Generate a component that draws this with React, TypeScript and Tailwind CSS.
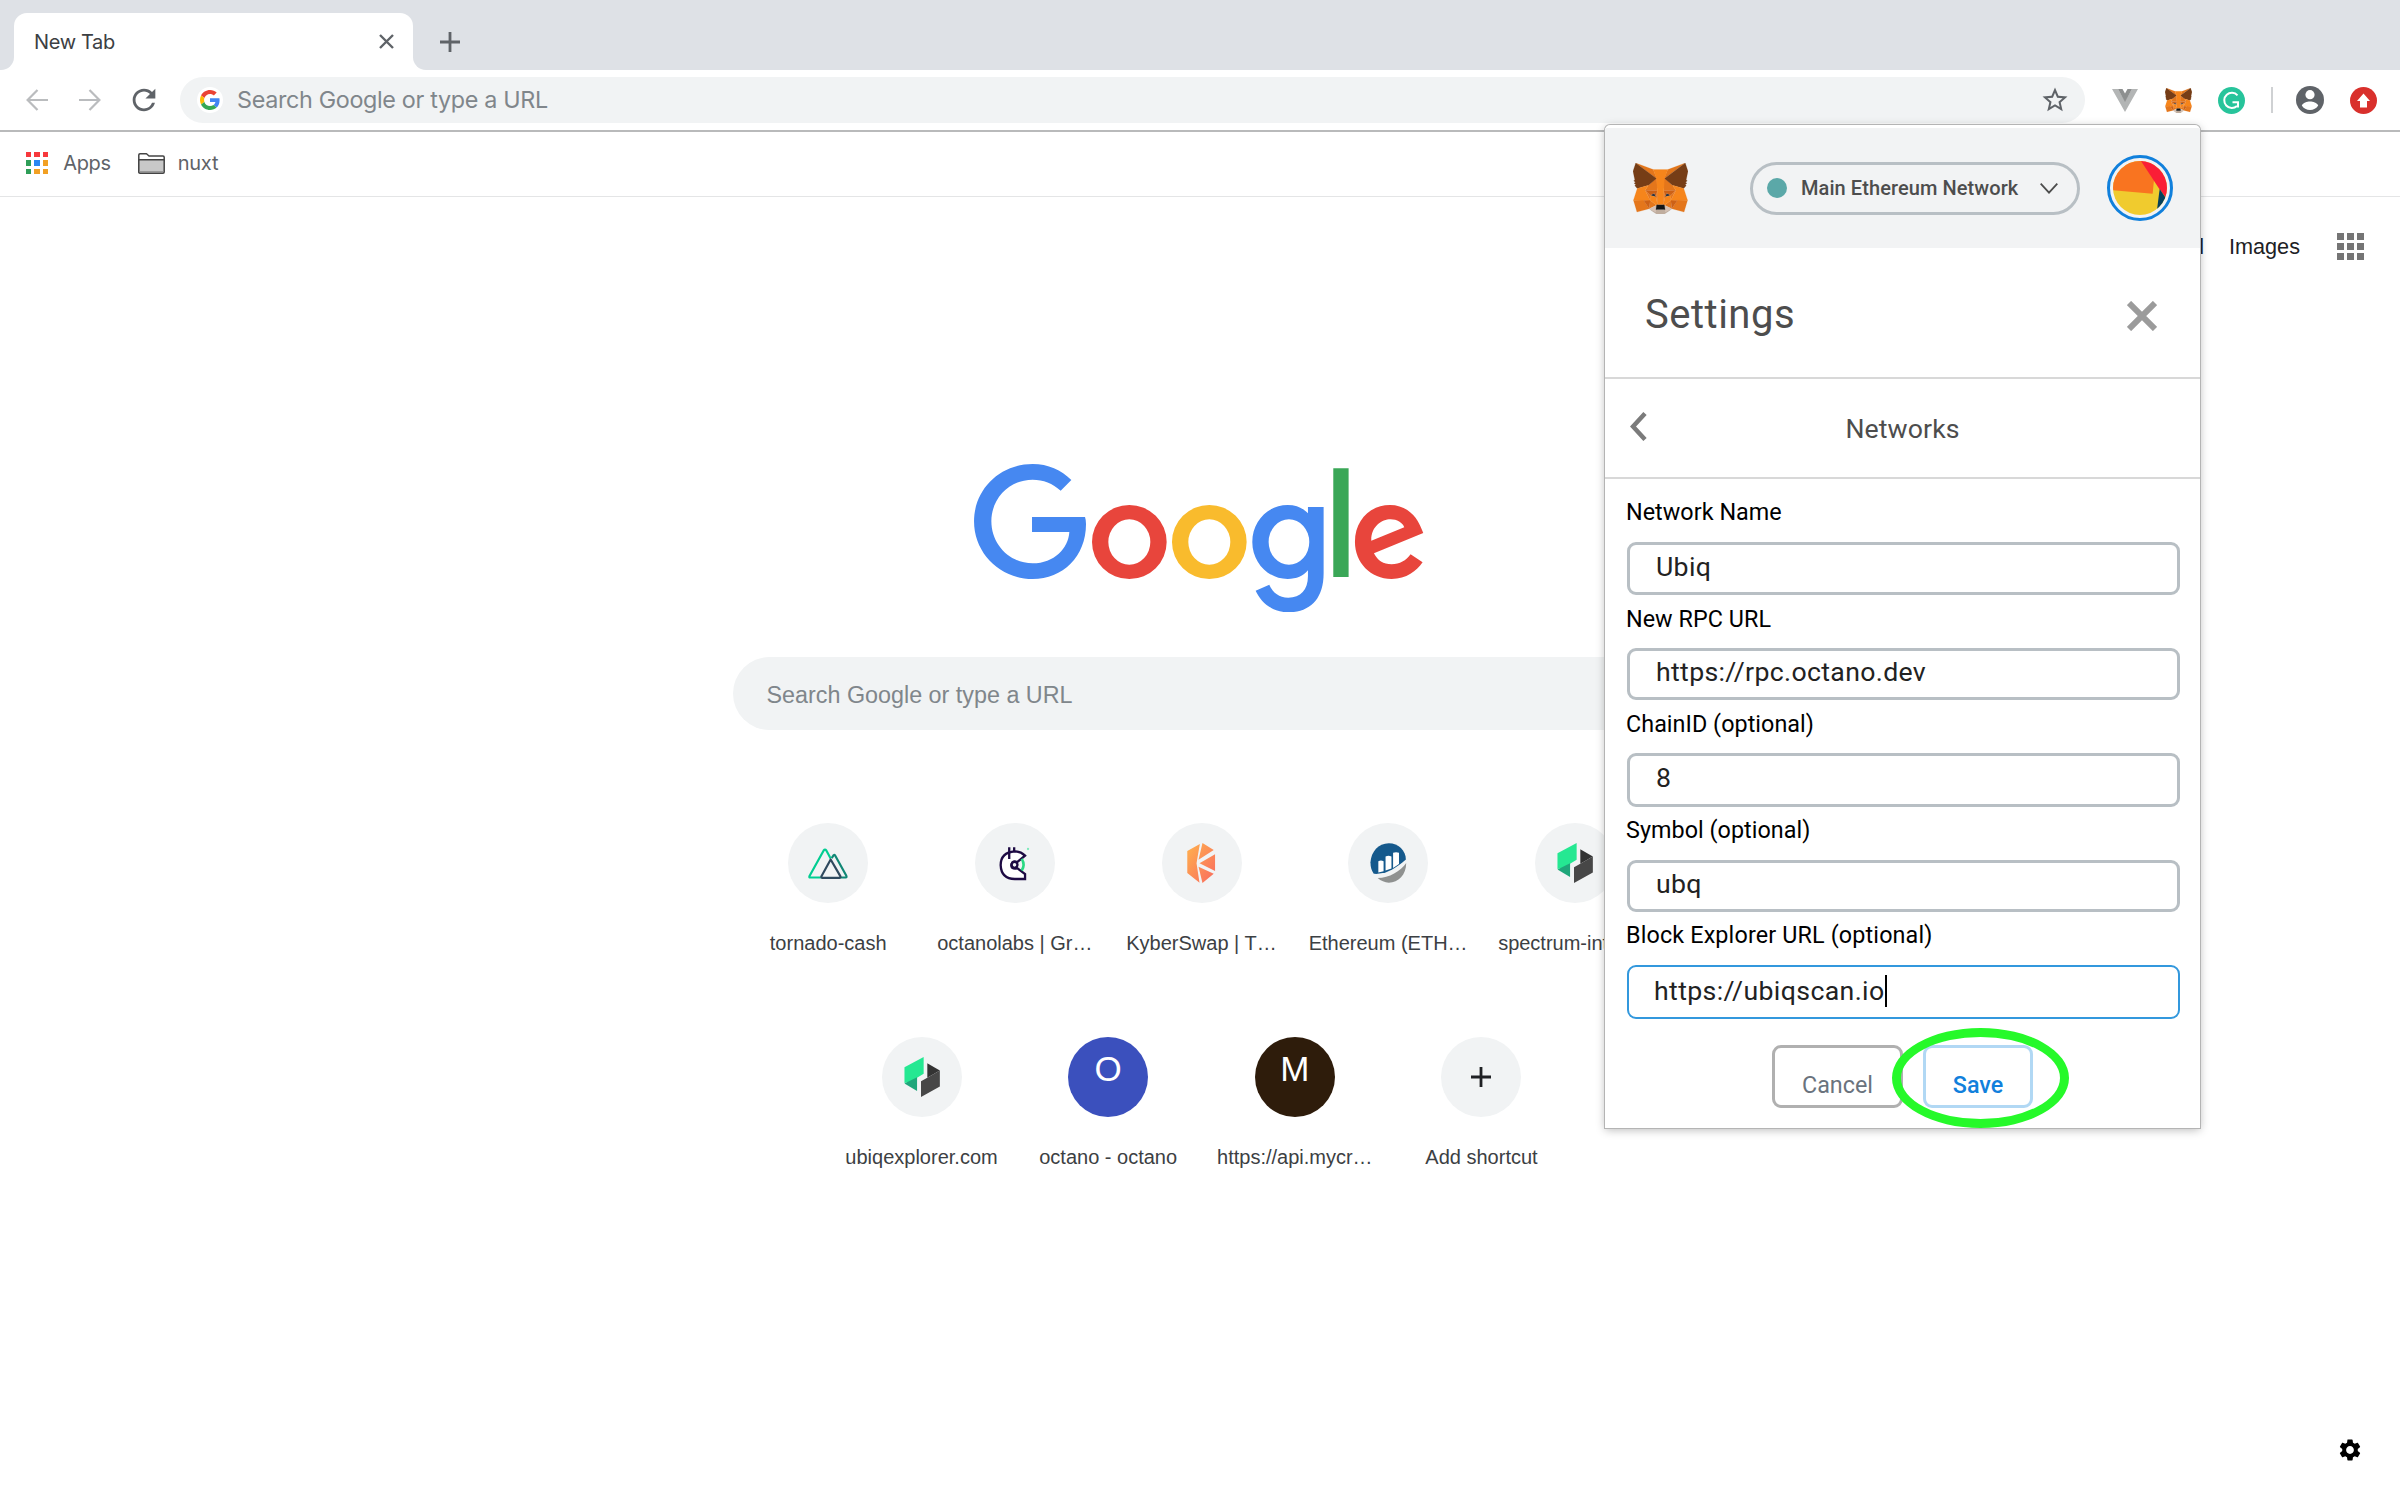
import React from "react";
import { MdSettings, MdStarBorder, MdRefresh } from "react-icons/md";

type IconProps = { className?: string };

function Fox({ className }: IconProps) {
  const shapes: [string, string][] = [
    ["#E2761B", "274.1,35.5 174.6,109.4 193,65.8"],
    ["#E4761B", "44.4,35.5 143.1,110.1 125.6,65.8"],
    ["#E4761B", "238.3,206.8 211.8,247.4 268.5,263 284.8,207.7"],
    ["#E4761B", "33.9,207.7 50.1,263 106.8,247.4 80.3,206.8"],
    ["#E4761B", "103.6,138.2 87.8,162.1 144.1,164.6 142.1,104.1"],
    ["#E4761B", "214.9,138.2 175.9,103.4 174.6,164.6 230.8,162.1"],
    ["#E4761B", "106.8,247.4 140.6,230.9 111.4,208.1"],
    ["#E4761B", "177.9,230.9 211.8,247.4 207.1,208.1"],
    ["#D7C1B3", "211.8,247.4 177.9,230.9 180.6,253 180.3,262.3"],
    ["#D7C1B3", "106.8,247.4 138.3,262.3 138.1,253 140.6,230.9"],
    ["#233447", "138.8,193.5 110.6,185.2 130.5,176.1"],
    ["#233447", "179.7,193.5 188,176.1 208,185.2"],
    ["#CD6116", "106.8,247.4 111.6,206.8 80.3,207.7"],
    ["#CD6116", "207,206.8 211.8,247.4 238.3,207.7"],
    ["#CD6116", "230.8,162.1 174.6,164.6 179.8,193.5 188.1,176.1 208.1,185.2"],
    ["#CD6116", "110.6,185.2 130.6,176.1 138.8,193.5 144.1,164.6 87.8,162.1"],
    ["#E4751F", "87.8,162.1 111.4,208.1 110.6,185.2"],
    ["#E4751F", "208.1,185.2 207.1,208.1 230.8,162.1"],
    ["#E4751F", "144.1,164.6 138.8,193.5 145.4,227.6 146.9,182.7"],
    ["#E4751F", "174.6,164.6 171.9,182.6 173.1,227.6 179.8,193.5"],
    ["#F6851B", "179.8,193.5 173.1,227.6 177.9,230.9 207.1,208.1 208.1,185.2"],
    ["#F6851B", "110.6,185.2 111.4,208.1 140.6,230.9 145.4,227.6 138.8,193.5"],
    ["#C0AD9E", "180.3,262.3 180.6,253 178.1,250.8 140.4,250.8 138.1,253 138.3,262.3 106.8,247.4 117.8,256.4 140.1,271.9 178.4,271.9 200.8,256.4 211.8,247.4"],
    ["#161616", "177.9,230.9 173.1,227.6 145.4,227.6 140.6,230.9 138.1,253 140.4,250.8 178.1,250.8 180.6,253"],
    ["#763D16", "278.3,114.2 286.8,73.4 274.1,35.5 177.9,106.9 214.9,138.2 267.2,153.5 278.8,140 273.8,136.4 281.8,129.1 275.6,124.3 283.6,118.2"],
    ["#763D16", "31.8,73.4 40.3,114.2 34.9,118.2 42.9,124.3 36.8,129.1 44.8,136.4 39.8,140 51.3,153.5 103.6,138.2 140.6,106.9 44.4,35.5"],
    ["#F6851B", "267.2,153.5 214.9,138.2 230.8,162.1 207.1,208.1 238.3,207.7 284.8,207.7"],
    ["#F6851B", "103.6,138.2 51.3,153.5 33.9,207.7 80.3,207.7 111.4,208.1 87.8,162.1"],
    ["#F6851B", "174.6,164.6 177.9,106.9 193.1,65.8 125.6,65.8 140.6,106.9 144.1,164.6 145.3,182.8 145.4,227.6 173.1,227.6 173.3,182.8"],
  ];
  return (
    <svg viewBox="31.8 35.5 255 236.4" className={className}>
      {shapes.map(([fill, points]) => (
        <polygon key={points} fill={fill} stroke={fill} strokeWidth="0.8" points={points} />
      ))}
    </svg>
  );
}

function GoogleLogo({ className }: IconProps) {
  return (
    <svg viewBox="72 72 1348 445" className={className} fillRule="evenodd">
      <path fill="#4688f1" d="M364 120L332 152C308 130 280 119 248 119C178 119 124 175 124 244C124 313 178 370 248 370C313 370 355 325 358 276H246V231H405Q408 240 408 252C408 350 338 417 248 417C150 417 72 340 72 244C72 148 150 72 248 72C294 72 334 90 364 120Z" />
      <path fill="#e8453c" d="M426 306A112 111 0 1 0 650 306A112 111 0 1 0 426 306ZM475 306A63 68 0 1 1 601 306A63 68 0 1 1 475 306Z" />
      <path fill="#f9bb2d" d="M666 306A112 111 0 1 0 890 306A112 111 0 1 0 666 306ZM715 306A63 68 0 1 1 841 306A63 68 0 1 1 715 306Z" />
      <path fill="#4688f1" d="M1074 201H1121V400C1121 478 1080 517 1015 517C965 517 932 485 917 452L958 434C967 455 985 473 1015 473C1052 473 1074 450 1074 408V391C1060 408 1040 417 1013 417C955 417 907 368 907 306C907 243 955 195 1013 195C1040 195 1060 205 1074 220ZM956 306A61 68 0 1 0 1078 306A61 68 0 1 0 956 306Z" />
      <path fill="#3aa757" d="M1150 85H1196V411H1150Z" />
      <path fill="#e8453c" d="M1382 343L1418 367C1400 393 1370 417 1325 417C1262 417 1215 368 1215 306C1215 240 1262 195 1320 195C1378 195 1405 240 1415 267L1420 279L1272 340C1283 362 1300 373 1325 373C1350 373 1368 362 1382 343ZM1264 302L1363 262C1358 248 1341 238 1322 238C1295 238 1263 260 1264 302Z" />
    </svg>
  );
}

function GoogleG({ className }: IconProps) {
  return (
    <svg viewBox="0 0 48 48" className={className}>
      <path fill="#EA4335" d="M24 9.5c3.54 0 6.71 1.22 9.21 3.6l6.85-6.85C35.9 2.38 30.47 0 24 0 14.62 0 6.51 5.38 2.56 13.22l7.98 6.19C12.43 13.72 17.74 9.5 24 9.5z" />
      <path fill="#4285F4" d="M46.98 24.55c0-1.57-.15-3.09-.38-4.55H24v9.02h12.94c-.58 2.96-2.26 5.48-4.78 7.18l7.73 6c4.51-4.18 7.09-10.36 7.09-17.65z" />
      <path fill="#FBBC05" d="M10.53 28.59c-.48-1.45-.76-2.99-.76-4.59s.27-3.14.76-4.59l-7.98-6.19C.92 16.46 0 20.12 0 24c0 3.88.92 7.54 2.56 10.78l7.97-6.19z" />
      <path fill="#34A853" d="M24 48c6.48 0 11.93-2.13 15.89-5.81l-7.73-6c-2.15 1.45-4.92 2.3-8.16 2.3-6.26 0-11.57-4.22-13.47-9.91l-7.98 6.19C6.51 42.62 14.62 48 24 48z" />
    </svg>
  );
}

function Arrow({ className }: IconProps) {
  return (
    <svg viewBox="0 0 22 22" className={className} fill="none" stroke="#babcbe" strokeWidth="2.2">
      <path d="M22 11H2M11.5 1L1.6 11L11.5 21" />
    </svg>
  );
}

function Folder() {
  return (
    <svg viewBox="0 0 27 21" className="h-[21px] w-[27px]" stroke="#444" strokeWidth="1.5" strokeLinejoin="round">
      <path fill="#fff" d="M.8 19V2Q.8 .8 2 .8H8.5L11 3H25Q26.2 3 26.2 4.2V8H.8Z" />
      <path fill="#c8c8c8" d="M.8 6.7H26.2V19Q26.2 20.2 25 20.2H2Q.8 20.2 .8 19Z" />
      <path stroke="#999" strokeWidth="1.2" d="M1.8 18.6H25.2" />
    </svg>
  );
}

function Nuxt() {
  return (
    <svg viewBox="266 622 120 92" className="h-[31px] w-[40px]" fill="none" strokeLinejoin="round" strokeWidth="6.5">
      <path stroke="#108775" d="M337 652L343 643Q345 641 347 643L381 705Q383 710 379 710H362" />
      <path stroke="#00cd91" d="M304 710H271Q269 709 271 705L313 629Q317 624 321 629L334 653" />
      <path stroke="#2f495e" d="M334 656L306 707Q305 711 309 711H360Q365 710 363 706Z" />
    </svg>
  );
}

function Gridcoin() {
  return (
    <svg viewBox="837 615 94 106" className="h-[35px] w-[31px]" fill="none">
      <path fill="#fff" stroke="#1d0a43" strokeWidth="7" d="M916 644Q903 631 885 631Q842 634 842 673Q844 715 885 715H916V700L892 682Q884 686 876 680Q872 672 878 664Q884 660 892 664Z" />
      <circle cx="884" cy="672" r="9" stroke="#1d0a43" strokeWidth="7" />
      <path stroke="#1d0a43" strokeWidth="7" d="M868 619V654M883 619V633" />
      <path stroke="#2ad983" strokeWidth="8" d="M906 654Q917 672 906 689" />
      <circle cx="925" cy="624" r="3.5" fill="#7eeabb" />
    </svg>
  );
}

function Kyber() {
  return (
    <svg viewBox="260 129 86 121" className="h-[40px] w-[29px]">
      <defs>
        <linearGradient id="kyber" x1="0" y1="0" x2="1" y2="1" gradientUnits="objectBoundingBox">
          <stop offset="0" stopColor="#ffb24d" />
          <stop offset="1" stopColor="#f96a5f" />
        </linearGradient>
      </defs>
      <path fill="url(#kyber)" d="M298 132L260 153V220L297 249L288 190ZM306 129L340 150L294 180ZM344 163V214L297 190ZM294 201L340 222L306 250Z" />
    </svg>
  );
}

function Etherscan() {
  return (
    <svg viewBox="808 128 110 122" className="h-[40px] w-[37px]">
      <path fill="#15598c" d="M818 222Q808 208 808 187C810 155 832 129 864 129C893 129 916 152 916 178C905 188 885 203 866 213C850 221 833 223 818 222Z" />
      <path fill="#fff" d="M832 184Q840 178 848 184V214L832 218ZM854 169Q863 165 872 169V206L854 212ZM877 158Q886 154 895 158V192L877 204Z" />
      <path fill="#8f9190" d="M917 189C917 225 893 249 864 249Q845 248 830 235C865 235 900 214 917 189Z" />
    </svg>
  );
}

function Ubiq() {
  return (
    <svg viewBox="1371 129 108 121" className="h-[40px] w-[36px]">
      <path fill="#25e892" d="M1430 129V180L1410 192V200L1372 208V160Z" />
      <path fill="#1fa67a" d="M1372 209L1410 190V232Z" />
      <path fill="#333" d="M1441 148L1479 170L1441 192Z" />
      <path fill="#474747" d="M1422 202L1441 192L1479 170V218L1422 250Z" />
    </svg>
  );
}

function PlusMark() {
  return (
    <svg viewBox="0 0 20 20" className="size-5" stroke="#202124" strokeWidth="2.8">
      <path d="M10 0V20M0 10H20" />
    </svg>
  );
}

function Shortcut({ label, tone = "bg-[#f1f3f4]", children }: { label: string; tone?: string; children: React.ReactNode }) {
  return (
    <div className="flex h-[213.33px] w-[186.67px] flex-col items-center">
      <div className={`flex size-20 shrink-0 items-center justify-center rounded-full ${tone}`}>{children}</div>
      <div className="mt-[28px] text-[20px] leading-[24px] whitespace-nowrap text-[#3c4043]">{label}</div>
    </div>
  );
}

function Letter({ children }: { children: string }) {
  return <span className="-mt-[16px] text-[35px] leading-[40px] text-white">{children}</span>;
}

const waffle = ["a", "b", "c", "d", "e", "f", "g", "h", "i"];
const appColors = ["bg-[#f7383c]", "bg-[#f7383c]", "bg-[#f7383c]", "bg-[#2f9e58]", "bg-[#2a86f0]", "bg-[#f2a023]", "bg-[#2f9e58]", "bg-[#f2a023]", "bg-[#f2a023]"];

const fields = [
  { label: "Network Name", value: "Ubiq", row: "h-[107px]", box: "h-[53px]", gap: "mb-[17px]" },
  { label: "New RPC URL", value: "https://rpc.octano.dev", row: "h-[105px]", box: "h-[52px]", gap: "mb-[16px]" },
  { label: "ChainID (optional)", value: "8", row: "h-[106px]", box: "h-[54px]", gap: "mb-[16px]" },
  { label: "Symbol (optional)", value: "ubq", row: "h-[105px]", box: "h-[52px]", gap: "mb-[17px]" },
];

function Popup() {
  return (
    <div className="absolute top-[125px] left-[1605px] flex h-[1003px] w-[595px] flex-col rounded-t-[5px] bg-white pt-[3px] font-['Roboto',sans-serif] shadow-[0_0_0_1px_#b4b4b4,0_2px_10px_rgba(0,0,0,0.28)]">
      <div className="flex h-[120px] shrink-0 items-center bg-[#f2f3f4] pl-[28px]">
        <Fox className="h-[51px] w-[55px]" />
        <div className="ml-[62px] flex h-[53px] w-[330px] items-center rounded-full border-[3px] border-[#b8bfc4] pl-[14px]">
          <span className="size-5 rounded-full bg-[#5ba8a8]" />
          <span className="ml-[14px] text-[20px] leading-6 font-medium tracking-[0.08px] whitespace-nowrap text-[#4d4d4d]">Main Ethereum Network</span>
          <svg viewBox="0 0 18 11" className="mr-[19px] ml-auto h-[11px] w-[18px]" fill="none" stroke="#4d4d4d" strokeWidth="1.8">
            <path d="M.7 .7L9 9.7L17.3 .7" />
          </svg>
        </div>
        <div className="ml-[27px] flex size-[66px] items-center justify-center rounded-full border-[3px] border-[#1180dc]">
          <svg viewBox="399 304 162 162" className="size-[54px] rounded-full">
            <path fill="#f0cb2e" d="M399 304H561V466H399Z" />
            <path fill="#f97420" d="M399 304H487L522 360L518 402L399 392Z" />
            <path fill="#fa1e36" d="M483 304H561V418L538 388Z" />
            <path fill="#04405c" d="M539 388L561 420V466H529Z" />
          </svg>
        </div>
      </div>
      <div className="flex h-[131px] shrink-0 items-center justify-between border-b-2 border-[#d8d8d8] pr-[43px] pl-[40px] text-[#4d4d4d]">
        <span className="mt-[5px] text-[40px] leading-[48px] tracking-[0.5px]">Settings</span>
        <svg viewBox="0 0 30 30" className="mt-[7px] size-[30px]" stroke="#9b9b9b" strokeWidth="6">
          <path d="M2 2L28 28M28 2L2 28" />
        </svg>
      </div>
      <div className="grid h-[100px] shrink-0 grid-cols-[40px_1fr_40px] items-center border-b-2 border-[#d8d8d8] text-[#4d4d4d]">
        <svg viewBox="0 0 17 29" className="-mt-[3px] ml-[25px] h-[29px] w-[17px]" fill="none" stroke="#7b7b7b" strokeWidth="4.5">
          <path d="M15 1.5L3 14.5L15 27.5" />
        </svg>
        <span className="mt-px text-center text-[26.67px] leading-8 tracking-[0.1px]">Networks</span>
      </div>
      <div className="flex flex-col px-[22px] pt-[20px]">
        {fields.map((f) => (
          <div key={f.label} className={f.row}>
            <div className={`-ml-px text-[23.33px] leading-[26px] tracking-[0.05px] text-black ${f.gap}`}>{f.label}</div>
            <div className={`flex w-[553px] items-center rounded-[9px] border-[3px] border-[#b8bfc4] pb-[4px] pl-[26px] text-[26.67px] leading-8 tracking-[0.34px] text-[#222] ${f.box}`}>{f.value}</div>
          </div>
        ))}
        <div>
          <div className="mb-[17px] -ml-px text-[23.33px] leading-[26px] tracking-[0.15px] text-black">Block Explorer URL (optional)</div>
          <div className="flex h-[54px] w-[553px] items-center rounded-[9px] border-2 border-[#3398dd] pb-[3px] pl-[25px] text-[26.67px] leading-8 tracking-[0.38px] text-[#222]">
            https://ubiqscan.io
            <span className="h-8 w-[2px] bg-black" />
          </div>
        </div>
      </div>
      <div className="relative mt-[26px] flex pl-[167px] text-[23.33px] leading-7">
        <div className="flex h-[63px] w-[131px] items-center justify-center rounded-[9px] border-[3px] border-[#b0b0b0] pt-[17px] text-[#6a737d]">Cancel</div>
        <div className="ml-[20px] flex h-[63px] w-[110px] items-center justify-center rounded-[9px] border-[3px] border-[#b1d8f4] pt-[17px] font-medium text-[#1180dc]">Save</div>
        <div className="absolute -top-[17px] left-[287px] h-[100px] w-[177px] rounded-[50%] border-[9px] border-[#26f92a]" />
      </div>
    </div>
  );
}

export default function App() {
  return (
    <div className="relative flex h-[1500px] w-[2400px] flex-col overflow-hidden bg-white font-['Liberation_Sans',Arial,sans-serif]">
      <div className="flex h-[70px] shrink-0 items-end bg-[#dee1e6]">
        <div className="h-[57px] w-[14px] bg-white"><div className="size-full rounded-br-[13px] bg-[#dee1e6]" /></div>
        <div className="flex h-[57px] w-[399px] items-center justify-between rounded-t-[13px] bg-white pr-[19px] pl-[20px] font-['Inter',sans-serif] text-[20px] tracking-[-0.35px] text-[#3c4043]">
          <span>New Tab</span>
          <svg viewBox="0 0 15 15" className="size-[15px]" stroke="#5f6368" strokeWidth="2.4">
            <path d="M1 1L14 14M14 1L1 14" />
          </svg>
        </div>
        <div className="h-[57px] w-[14px] bg-white"><div className="size-full rounded-bl-[13px] bg-[#dee1e6]" /></div>
        <svg viewBox="0 0 20 20" className="mb-[18px] ml-[13px] size-5" stroke="#5f6368" strokeWidth="2.8">
          <path d="M10 0V20M0 10H20" />
        </svg>
      </div>
      <div className="flex h-[62px] shrink-0 items-center border-b-2 border-[#b9babb] pl-[26px]">
        <Arrow className="size-[22px]" />
        <Arrow className="ml-[31px] size-[22px] rotate-180" />
        <MdRefresh className="ml-[26px] size-[34px] text-[#5f6368]" />
        <div className="ml-[19px] flex h-[46px] w-[1905px] items-center rounded-full bg-[#f1f3f4] pr-[15px] pl-[17px]">
          <div className="flex size-[26px] items-center justify-center rounded-full bg-white"><GoogleG className="size-5" /></div>
          <span className="ml-[14px] font-['Inter',sans-serif] text-[23.33px] tracking-[-0.33px] whitespace-nowrap text-[#80868b]">Search Google or type a URL</span>
          <MdStarBorder className="ml-auto size-[30px] text-[#5f6368]" />
        </div>
        <svg viewBox="0 0 26 23" className="ml-[27px] h-[23px] w-[26px]">
          <path fill="#b3b5b5" d="M0 0H6L13 12L20 0H26L13 23Z" />
          <path fill="#8d8f8f" d="M6 0H10.5L13 4.5L15.5 0H20L13 13Z" />
        </svg>
        <Fox className="ml-[27px] h-[25px] w-[27px]" />
        <svg viewBox="0 0 27 27" className="ml-[26px] size-[27px]" fill="none">
          <circle cx="13.5" cy="13.5" r="13.5" fill="#27c49b" />
          <path stroke="#fff" strokeWidth="2" d="M19.5 8.3A7.6 7.6 0 1 0 19 19M14.5 15.3H20V20.5" />
        </svg>
        <div className="ml-[26px] h-[26px] w-[2px] bg-[#cfd1d3]" />
        <svg viewBox="0 0 28 28" className="ml-[23px] size-[28px]">
          <circle cx="14" cy="14" r="14" fill="#5f6368" />
          <circle cx="14" cy="8.7" r="4.6" fill="#fff" />
          <path fill="#fff" d="M5.8 19.5C7 16.8 11 15.5 14 15.5S21 16.8 22.2 19.5C20.5 22.3 17.5 24 14 24S7.5 22.3 5.8 19.5Z" />
        </svg>
        <svg viewBox="0 0 27 27" className="ml-[26px] size-[27px]">
          <circle cx="13.5" cy="13.5" r="13.5" fill="#d9302c" />
          <path fill="#fff" d="M13.5 6.5L20 14H17V20.5H10V14H7Z" />
        </svg>
      </div>
      <div className="flex h-[65px] shrink-0 items-center border-b border-[#e4e5e6] pb-[2px] pl-[26px] font-['Inter',sans-serif] text-[20px] tracking-[-0.3px] text-[#5f6368]">
        <div className="grid grid-cols-3 gap-[3px]">
          {appColors.map((c, i) => <span key={i} className={`size-[5.4px] ${c}`} />)}
        </div>
        <span className="ml-[15px]">Apps</span>
        <span className="ml-[27px]"><Folder /></span>
        <span className="ml-[13px]">nuxt</span>
      </div>
      <div className="mt-[34px] flex h-[32px] shrink-0 items-center justify-end pr-[36px] text-[21.67px] leading-8 text-[#202124]">
        <span>Gmail</span>
        <span className="ml-[25px]">Images</span>
        <div className="ml-[37px] grid -translate-y-px grid-cols-3 gap-[3px]">
          {waffle.map((w) => <span key={w} className="size-[7px] bg-[#757575]" />)}
        </div>
      </div>
      <div className="flex flex-col items-center">
        <GoogleLogo className="mt-[201px] mr-[2px] h-[148.3px] w-[449.3px]" />
        <div className="mt-[45px] flex h-[73px] w-[935px] shrink-0 items-center rounded-full bg-[#f1f3f4] pt-[2px] pl-[34px] text-[23.33px] leading-8 text-[#80868b]">Search Google or type a URL</div>
        <div className="mt-[93px] flex flex-col items-center pl-[3px]">
          <div className="flex">
            <Shortcut label="tornado-cash"><Nuxt /></Shortcut>
            <Shortcut label="octanolabs | Gr…"><Gridcoin /></Shortcut>
            <Shortcut label="KyberSwap | T…"><Kyber /></Shortcut>
            <Shortcut label="Ethereum (ETH…"><Etherscan /></Shortcut>
            <Shortcut label="spectrum-interf…"><Ubiq /></Shortcut>
          </div>
          <div className="flex">
            <Shortcut label="ubiqexplorer.com"><Ubiq /></Shortcut>
            <Shortcut label="octano - octano" tone="bg-[#3b50bd]"><Letter>O</Letter></Shortcut>
            <Shortcut label="https://api.mycr…" tone="bg-[#2e1c0b]"><Letter>M</Letter></Shortcut>
            <Shortcut label="Add shortcut"><PlusMark /></Shortcut>
          </div>
        </div>
      </div>
      <MdSettings className="mt-auto mr-[37px] mb-[37px] size-[26px] shrink-0 self-end text-black" />
      <Popup />
    </div>
  );
}
